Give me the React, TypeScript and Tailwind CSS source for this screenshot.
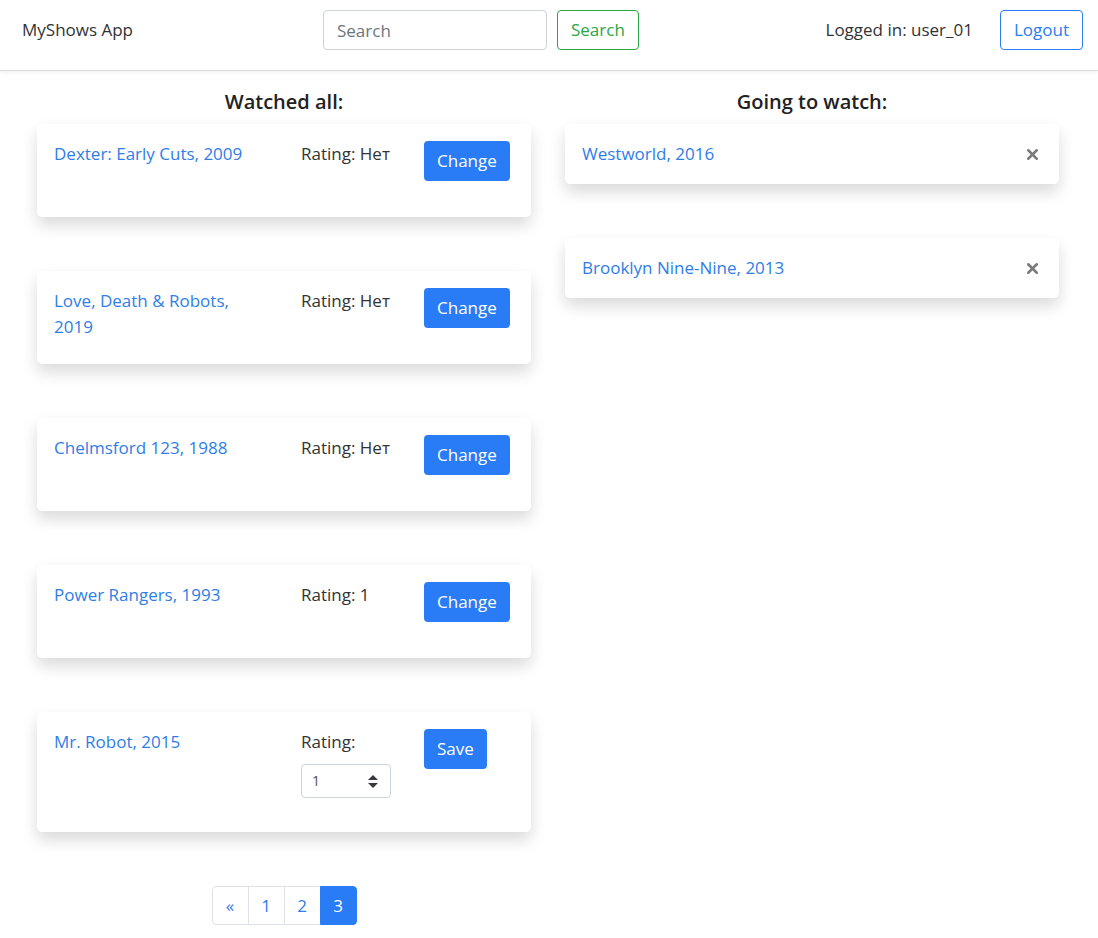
import { X } from 'lucide-react';

type Watched = { title: string; rating: string; editing?: boolean };

const watched: Watched[] = [
  { title: 'Dexter: Early Cuts, 2009', rating: 'Нет' },
  { title: 'Love, Death & Robots, 2019', rating: 'Нет' },
  { title: 'Chelmsford 123, 1988', rating: 'Нет' },
  { title: 'Power Rangers, 1993', rating: '1' },
  { title: 'Mr. Robot, 2015', rating: '1', editing: true },
];

const planned = ['Westworld, 2016', 'Brooklyn Nine-Nine, 2013'];

function Navbar() {
  return (
    <nav className="flex h-[71px] items-start justify-between border-b border-[#dcdcdc] bg-white pt-[10px] pl-[22px] pr-[15px] shadow-[0_1px_4px_rgba(0,0,0,0.08)]">
      <span className="flex h-[40px] w-[301px] items-center text-[#333]">MyShows App</span>
      <div className="flex items-center gap-[10px]">
        <input
          placeholder="Search"
          className="h-[40px] w-[224px] rounded-[4px] border border-[#ced4da] px-[13px] text-[#495057] outline-none placeholder:text-[#6c757d]"
        />
        <button className="h-[40px] rounded-[4px] border border-[#28a745] px-[13px] text-[#28a745]">Search</button>
      </div>
      <div className="ml-auto flex items-center gap-[27px]">
        <span className="text-[#333]">Logged in: user_01</span>
        <button className="h-[40px] rounded-[4px] border border-[#2a7cf6] px-[13px] text-[#2a7cf6]">Logout</button>
      </div>
    </nav>
  );
}

function WatchedCard({ show }: { show: Watched }) {
  return (
    <div className="flex rounded-[5px] bg-white px-[17px] pt-[17px] pb-[18px] shadow-[0_8px_16px_rgba(0,0,0,0.15)]">
      <div className="w-[247px] pr-[30px]">
        <a className="text-[#2f7de8]">{show.title}</a>
      </div>
      <div className="w-[123px]">
        {show.editing ? (
          <div className="mb-[16px]">
            <div className="text-[#333]">Rating:</div>
            <div className="mt-[9px] flex h-[34px] w-[90px] items-center justify-between rounded-[4px] border border-[#ced4da] pl-[10px] pr-[12px] text-[14px] text-[#495057]">
              <span>1</span>
              <svg width="10" height="13" viewBox="0 0 10 13" fill="#343a40">
                <path d="M5 0 L10 5 H0 Z" />
                <path d="M0 8 H10 L5 13 Z" />
              </svg>
            </div>
          </div>
        ) : (
          <span className="text-[#333]">Rating: {show.rating}</span>
        )}
      </div>
      <div>
        <button className="mb-[18px] h-[40px] rounded-[4px] bg-[#2a7cf6] px-[13px] text-white">
          {show.editing ? 'Save' : 'Change'}
        </button>
      </div>
    </div>
  );
}

function PlannedCard({ title }: { title: string }) {
  return (
    <div className="flex items-center justify-between rounded-[5px] bg-white px-[17px] pt-[17px] pb-[17px] shadow-[0_8px_16px_rgba(0,0,0,0.15)]">
      <a className="text-[#2f7de8]">{title}</a>
      <X className="mr-[1px] h-[17px] w-[17px] text-[#7a7a7a]" strokeWidth={3.5} />
    </div>
  );
}

function Pagination() {
  const items = ['«', '1', '2', '3'];
  return (
    <div className="flex justify-center">
      <div className="flex">
        {items.map((p, i) => (
          <span
            key={p}
            className={
              'flex h-[39px] w-[37px] items-center justify-center border text-[#2f7de8] ' +
              (i === 0 ? 'rounded-l-[4px] ' : '-ml-px ') +
              (i === 3 ? 'rounded-r-[4px] border-[#2a7cf6] bg-[#2a7cf6] text-white' : 'border-[#dee2e6] bg-white')
            }
          >
            {p}
          </span>
        ))}
      </div>
    </div>
  );
}

export default function App() {
  return (
    <div className="min-h-screen bg-white text-[17px] leading-[26px] font-['Open_Sans',sans-serif]">
      <Navbar />
      <div className="flex gap-[34px] pl-[37px] pt-[17px]">
        <div className="w-[494px]">
          <h2 className="mb-[8px] text-center text-[20px] leading-[28px] font-semibold text-[#222]">Watched all:</h2>
          <div className="flex flex-col gap-[54px]">
            {watched.map((s) => (
              <WatchedCard key={s.title} show={s} />
            ))}
            <Pagination />
          </div>
        </div>
        <div className="w-[494px]">
          <h2 className="mb-[8px] text-center text-[20px] leading-[28px] font-semibold text-[#222]">Going to watch:</h2>
          <div className="flex flex-col gap-[54px]">
            {planned.map((t) => (
              <PlannedCard key={t} title={t} />
            ))}
          </div>
        </div>
      </div>
    </div>
  );
}
